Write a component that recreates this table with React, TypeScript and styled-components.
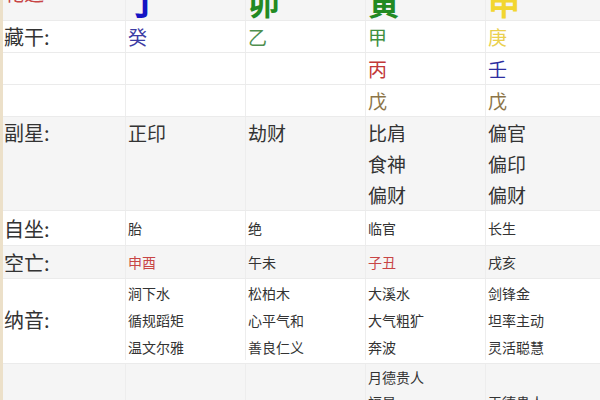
import styled, { createGlobalStyle } from 'styled-components';

const GlobalStyle = createGlobalStyle`
  html, body {
    margin: 0;
    padding: 0;
    background: #ffffff;
    overflow: hidden;
  }
`;

const Page = styled.div`
  width: 597px;
  height: 429px;
  margin-top: -29px;
  border-left: 3px solid #ece0c9;
  font-family: 'Noto Sans CJK SC', 'Noto Sans', sans-serif;
  color: #333;
  overflow: hidden;
`;

const Section = styled.div<{ $shade?: boolean; $pad?: string }>`
  display: grid;
  grid-template-columns: 122px repeat(3, 120px) 1fr;
  background: ${(p) => (p.$shade ? '#f5f5f5' : '#ffffff')};
  border-bottom: 1px solid #ebebeb;
  padding: ${(p) => p.$pad || '0'};
`;

const Label = styled.div<{ $h: number; $align?: string; $color?: string; $size?: number }>`
  height: ${(p) => p.$h}px;
  align-self: ${(p) => p.$align || 'center'};
  display: flex;
  align-items: center;
  font-size: ${(p) => p.$size || 20}px;
  color: ${(p) => p.$color || '#333'};
  padding-left: 1px;
  white-space: nowrap;
`;

const Cell = styled.div`
  border-left: 1px solid #ededed;
  padding-left: 2px;
  display: flex;
  flex-direction: column;
`;

const Line = styled.div<{ $h: number; $size: number; $color?: string }>`
  height: ${(p) => p.$h}px;
  display: flex;
  align-items: center;
  font-size: ${(p) => p.$size}px;
  color: ${(p) => p.$color || '#333'};
  white-space: nowrap;
`;

const BigChar = styled.div<{ $color: string }>`
  height: 49px;
  display: flex;
  align-items: flex-end;
  padding-bottom: 3px;
  box-sizing: border-box;
  font-size: 32px;
  font-weight: 700;
  line-height: 1;
  color: ${(p) => p.$color};
`;

type Item = { text: string; color?: string };

const Column = ({ items, h, size }: { items: Item[]; h: number; size: number }) => (
  <Cell>
    {items.map((it, i) => (
      <Line key={i} $h={h} $size={size} $color={it.color}>
        {it.text}
      </Line>
    ))}
  </Cell>
);

const RED = '#c84545';

const App = () => {
  const hidden: Item[][] = [
    [{ text: '癸', color: '#3c3ca4' }, { text: '乙', color: '#4f8f4f' }, { text: '甲', color: '#3f8f3f' }, { text: '庚', color: '#ead04e' }],
    [{ text: '' }, { text: '' }, { text: '丙', color: '#c23838' }, { text: '壬', color: '#2e2ea0' }],
    [{ text: '' }, { text: '' }, { text: '戊', color: '#8c7548' }, { text: '戊', color: '#8c7548' }],
  ];

  return (
    <>
      <GlobalStyle />
      <Page>
        <Section $shade>
          <Label $h={43} $align="start" $color={RED}>
            乾造
          </Label>
          <Cell>
            <BigChar $color="#1414c4">丁</BigChar>
          </Cell>
          <Cell>
            <BigChar $color="#228a22">卯</BigChar>
          </Cell>
          <Cell>
            <BigChar $color="#228a22">寅</BigChar>
          </Cell>
          <Cell>
            <BigChar $color="#f2d630">申</BigChar>
          </Cell>
        </Section>

        {hidden.map((row, r) => (
          <Section key={r}>
            <Label $h={31}>{r === 0 ? '藏干:' : ''}</Label>
            {row.map((it, i) => (
              <Column key={i} items={[it]} h={31} size={19} />
            ))}
          </Section>
        ))}

        <Section $shade>
          <Label $h={31} $align="start">
            副星:
          </Label>
          <Column items={[{ text: '正印' }]} h={31} size={19} />
          <Column items={[{ text: '劫财' }]} h={31} size={19} />
          <Column items={[{ text: '比肩' }, { text: '食神' }, { text: '偏财' }]} h={31} size={19} />
          <Column items={[{ text: '偏官' }, { text: '偏印' }, { text: '偏财' }]} h={31} size={19} />
        </Section>

        <Section>
          <Label $h={34}>自坐:</Label>
          <Column items={[{ text: '胎' }]} h={34} size={14} />
          <Column items={[{ text: '绝' }]} h={34} size={14} />
          <Column items={[{ text: '临官' }]} h={34} size={14} />
          <Column items={[{ text: '长生' }]} h={34} size={14} />
        </Section>

        <Section $shade>
          <Label $h={32}>空亡:</Label>
          <Column items={[{ text: '申酉', color: RED }]} h={32} size={14} />
          <Column items={[{ text: '午未' }]} h={32} size={14} />
          <Column items={[{ text: '子丑', color: RED }]} h={32} size={14} />
          <Column items={[{ text: '戌亥' }]} h={32} size={14} />
        </Section>

        <Section $pad="0 0 3px">
          <Label $h={27}>纳音:</Label>
          <Column items={[{ text: '涧下水' }, { text: '循规蹈矩' }, { text: '温文尔雅' }]} h={27} size={14} />
          <Column items={[{ text: '松柏木' }, { text: '心平气和' }, { text: '善良仁义' }]} h={27} size={14} />
          <Column items={[{ text: '大溪水' }, { text: '大气粗犷' }, { text: '奔波' }]} h={27} size={14} />
          <Column items={[{ text: '剑锋金' }, { text: '坦率主动' }, { text: '灵活聪慧' }]} h={27} size={14} />
        </Section>

        <Section $shade>
          <Label $h={25} />
          <Column items={[{ text: '' }, { text: '' }]} h={25} size={14} />
          <Column items={[{ text: '' }, { text: '' }]} h={25} size={14} />
          <Column items={[{ text: '月德贵人' }, { text: '福星' }]} h={25} size={14} />
          <Column items={[{ text: '' }, { text: '天德贵人' }]} h={25} size={14} />
        </Section>
      </Page>
    </>
  );
};

export default App;
